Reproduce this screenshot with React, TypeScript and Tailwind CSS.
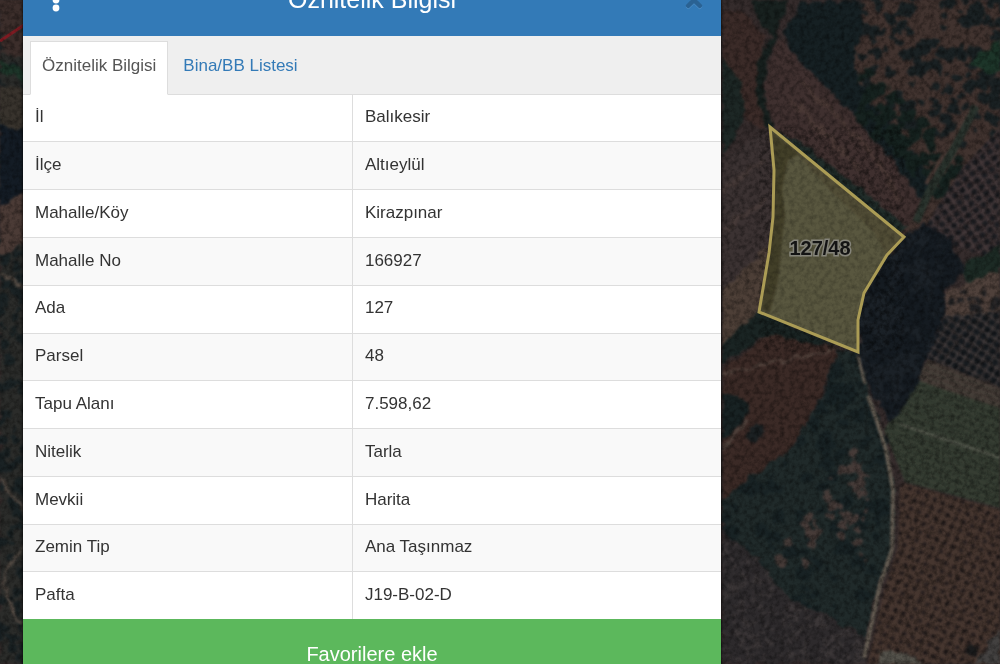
import { useState } from 'react'
import { FaTimes } from 'react-icons/fa'

const rows = [
    ['İl', 'Balıkesir'],
    ['İlçe', 'Altıeylül'],
    ['Mahalle/Köy', 'Kirazpınar'],
    ['Mahalle No', '166927'],
    ['Ada', '127'],
    ['Parsel', '48'],
    ['Tapu Alanı', '7.598,62'],
    ['Nitelik', 'Tarla'],
    ['Mevkii', 'Harita'],
    ['Zemin Tip', 'Ana Taşınmaz'],
    ['Pafta', 'J19-B-02-D'],
]

type Blob = { x: number; y: number; r: number; q: number }

// small seeded generator so the trees stay in the same place on every render
function scatter(seed: number, count: number, x: number, y: number, w: number, h: number, min: number, max: number): Blob[] {
    let s = seed
    const next = () => {
        s = (s * 16807) % 2147483647
        return s / 2147483647
    }
    return Array.from({ length: count }, () => ({
        x: x + next() * w,
        y: y + next() * h,
        r: min + next() * (max - min),
        q: 0.7 + next() * 0.5,
    }))
}

const scrub = scatter(71, 170, 850, -5, 160, 150, 2, 7)
const grove = scatter(19, 220, 860, 70, 110, 130, 3, 7)
const clearings = scatter(43, 80, 765, 450, 105, 115, 2, 6)
const forest = scatter(7, 190, 860, 225, 110, 190, 3, 8)
const valley = scatter(29, 260, 722, 340, 170, 300, 2, 8)
const heath = scatter(83, 420, 715, 540, 150, 125, 1, 3)
const leftTrees = scatter(101, 190, -4, 0, 34, 664, 2, 6)

function Blobs({ items, fill, opacity = 1 }: { items: Blob[]; fill: string; opacity?: number }) {
    return (
        <g fill={fill} opacity={opacity}>
            {items.map((b, i) => <ellipse key={i} cx={b.x} cy={b.y} rx={b.r} ry={b.r * b.q} />)}
        </g>
    )
}

function SatelliteMap() {
    return (
        <svg className="absolute inset-0 h-full w-full" viewBox="0 0 1000 664" preserveAspectRatio="xMidYMid slice" role="img" aria-label="Parsel 127/48">
            <defs>
                <filter id="rough" x="0" y="0" width="1" height="1" colorInterpolationFilters="sRGB">
                    <feTurbulence type="fractalNoise" baseFrequency="0.09" numOctaves="3" seed="4" result="n" />
                    <feDisplacementMap in="SourceGraphic" in2="n" scale="11" xChannelSelector="R" yChannelSelector="G" result="d" />
                    <feGaussianBlur in="d" stdDeviation="0.9" />
                </filter>
                <filter id="soft" colorInterpolationFilters="sRGB">
                    <feGaussianBlur stdDeviation="0.8" />
                </filter>
                <filter id="grain" x="0" y="0" width="1" height="1" colorInterpolationFilters="sRGB">
                    <feTurbulence type="fractalNoise" baseFrequency="0.2" numOctaves="4" seed="9" />
                    <feColorMatrix values="0 0 0 0 0  0 0 0 0 0  0 0 0 0 0  1.6 0 0 0 -0.6" />
                </filter>
                <pattern id="orchard" width="9" height="8" patternUnits="userSpaceOnUse" patternTransform="rotate(-35)">
                    <circle cx="4" cy="4" r="3" fill="#1b1c20" />
                </pattern>
                <pattern id="orchardDense" width="8" height="8" patternUnits="userSpaceOnUse" patternTransform="rotate(32)">
                    <circle cx="4" cy="4" r="3.3" fill="#161a1e" />
                </pattern>
                <pattern id="orchardRed" width="9" height="9" patternUnits="userSpaceOnUse" patternTransform="rotate(24)">
                    <circle cx="4" cy="4" r="2.2" fill="#241d1d" />
                </pattern>
                <pattern id="furrows" width="8" height="6" patternUnits="userSpaceOnUse" patternTransform="rotate(21)">
                    <path d="M0 2h8" stroke="#4a4b40" strokeWidth="1" />
                </pattern>
                <clipPath id="forestClip">
                    <path d="M904 237L925 222 948 238 966 272 944 290 946 312 930 352 912 395 890 424 866 380 858 352 858 320 864 293 887 255z" />
                </clipPath>
                <clipPath id="valleyClip">
                    <path d="M722 500L745 480 790 450 820 400 838 350 858 354 872 400 886 440 894 490 892 550 878 590 866 636 830 618 790 600 760 562 722 530z" />
                </clipPath>
            </defs>
            <rect width="1000" height="664" fill="#352c2c" />
            <g filter="url(#rough)">
                <rect x="840" width="160" height="240" fill="#41332f" />
                <Blobs items={scrub} fill="#1a2123" />
                <path d="M970 60L1000 40V72L985 74z" fill="#1d3529" />
                <path d="M722 10L742 12 766 36 758 78 764 128 722 110z" fill="#3b2b28" />
                <path d="M722 60L738 80 746 108 740 128 722 155z" fill="#1d2725" />
                <path d="M776 40L800 52 846 104 872 130 916 186 924 202 904 230 870 208 772 130 764 90z" fill="#3f302f" />
                <path d="M800 80L870 150 900 200M790 100L860 170" stroke="#4a3935" strokeWidth="4" fill="none" />
                <path d="M748 0H788L776 32 768 60 764 90 772 126 782 136 764 126 756 90 758 62 770 36z" fill="#18211f" />
                <path d="M782 34L802 2 862 0 862 32 852 62 872 104 908 144 936 184 926 204 904 176 868 132 842 102 800 62z" fill="#162023" />
                <path d="M772 128L800 142 870 196 908 228 896 234z" fill="#202c29" />
                <Blobs items={grove.filter(b => b.y < b.x - 740 && b.y > b.x - 800)} fill="#16221f" />
                <path d="M722 160L768 128 775 170 770 250 722 292z" fill="#3b3232" />
                <path d="M722 190L764 160M722 230L766 200" stroke="#463a38" strokeWidth="5" />
                <path d="M722 292L768 246 759 314 722 350z" fill="#4d3f37" />
                <path d="M722 345L758 310 838 346 758 340 722 364z" fill="#1a2423" />
            </g>
            <g filter="url(#soft)">
                <path d="M1000 128L962 168 938 206 926 226 946 244 1000 260z" fill="#413637" />
                <path d="M1000 128L962 168 938 206 926 226 946 244 1000 260z" fill="url(#orchard)" />
                <path d="M976 106L952 152 928 194 916 222" stroke="#2a332d" strokeWidth="8" fill="none" />
                <path d="M968 110L944 154 926 184" stroke="#483934" strokeWidth="4" fill="none" />
                <path d="M944 312L1000 306V388L926 358z" fill="#3e3838" />
                <path d="M944 312L1000 306V388L926 358z" fill="url(#orchardDense)" />
            </g>
            <g filter="url(#rough)">
                <path d="M960 268L1000 244V274L968 286z" fill="#1d2b25" />
                <path d="M944 292L1000 270V312L946 316z" fill="#4f413b" />
                <Blobs items={forest.filter(b => b.y > 290 && b.y < 312).map(b => ({ ...b, x: b.x + 60, r: b.r / 2 }))} fill="#222224" />
                <path d="M722 370L770 334 838 350 818 402 790 452 745 482 722 500z" fill="#3b2a26" />
                <path d="M722 376L772 362 838 350" stroke="#564740" strokeWidth="2" fill="none" />
                <path d="M722 450L748 420" stroke="#50433d" strokeWidth="4" />
                <path d="M722 392L740 396 750 410 736 430 722 438z" fill="#182223" />
                <circle cx="755" cy="434" r="9" fill="#1b2022" />
            </g>
            <g filter="url(#soft)">
                <path d="M928 360L1000 388V508L905 482 884 430z" fill="#31392f" />
                <path d="M928 360L1000 388V408L916 380z" fill="#433a35" />
                <path d="M928 360L1000 388V508L905 482 884 430z" fill="url(#furrows)" opacity="0.7" />
                <path d="M900 424L1000 458" stroke="#595c51" strokeWidth="2" />
                <path d="M900 482L1000 510V664H868L884 590 898 548z" fill="#46362f" />
                <path d="M900 482L1000 510V664H868L884 590 898 548z" fill="url(#orchardRed)" />
            </g>
            <g filter="url(#rough)">
                <path d="M722 530L760 562 790 600 866 636V664H722z" fill="#2d2a2c" />
                <Blobs items={heath.filter(b => b.y > 560 + (b.x - 760) * 0.75)} fill="#4a4343" opacity={0.55} />
            </g>
            <g filter="url(#rough)">
                <g clipPath="url(#valleyClip)">
                    <rect x="722" y="340" width="180" height="310" fill="#202a2a" />
                    <Blobs items={valley} fill="#162023" opacity={0.7} />
                    <Blobs items={clearings.filter(b => b.y > 600 - (b.x - 740) * 1.4)} fill="#463b38" />
                </g>
                <g clipPath="url(#forestClip)">
                    <rect x="850" y="215" width="125" height="215" fill="#1b2127" />
                    <Blobs items={forest} fill="#13191f" opacity={0.7} />
                </g>
                <path d="M876 664L882 650 904 652 920 664z" fill="#54524b" />
                <path d="M974 664L1000 626V664z" fill="#434140" />
                <circle cx="972" cy="652" r="6" fill="#1a1b1c" />
            </g>
            <g filter="url(#soft)" stroke="#645c52" fill="none">
                <path d="M858 356L865 384" strokeWidth="3" />
                <path d="M868 396L876 418 886 450 893 490 892 550 880 584 872 622 864 658" strokeWidth="4" />
            </g>
            {/* left edge of the map, beside the panel */}
            <g filter="url(#rough)">
                <rect width="30" height="664" fill="#2b2c2a" />
                <Blobs items={leftTrees} fill="#1a2224" />
                <path d="M0 0H30V60L0 52z" fill="#3c2e2b" />
                <path d="M0 60L30 72V82L0 72z" fill="#1d3529" />
                <path d="M0 84L30 90V130L0 124z" fill="#38332d" />
                <path d="M0 124L30 130V188L0 206z" fill="#141c25" />
                <path d="M0 206L30 188V240L0 256z" fill="#4b3b36" />
                <path d="M0 272L30 290M0 480L30 518M30 544C0 556 -4 604 30 632" stroke="#534a43" strokeWidth="3" fill="none" />
            </g>
            <path d="M0 41L24 25" stroke="#7d1b22" strokeWidth="3" />
            <rect width="1000" height="664" filter="url(#grain)" opacity="0.5" />
            <path d="M770 127L774 170 773 217 769 253 759 312 858 352 858 320 864 293 887 255 904 237z" fill="#59573f" />
            <g filter="url(#soft)">
                <path d="M772 132L774 170 773 217 769 253 761 310 770 312 778 282 782 240 785 215 782 190 788 160 800 154z" fill="#39351f" opacity="0.7" />
                <path d="M790 146L904 237 887 255 874 232 830 190z" fill="#4d4630" opacity="0.6" />
            </g>
            <path d="M770 127L774 170 773 217 769 253 759 312 858 352 858 320 864 293 887 255 904 237z" filter="url(#grain)" opacity="0.3" />
            <path d="M770 127L774 170 773 217 769 253 759 312 858 352 858 320 864 293 887 255 904 237z" fill="none" stroke="#ab9c55" strokeWidth="3" />
            <text x="820" y="255" textAnchor="middle" className="font-['Liberation_Sans'] text-[20px] font-bold" fill="#141414" stroke="#85847a" strokeWidth="3" paintOrder="stroke">127/48</text>
        </svg>
    )
}

export default function App() {
    const [tab, setTab] = useState('info')
    const active = 'border-[#ddd] border-b-white bg-white text-[#555]'
    const idle = 'border-transparent text-[#337ab7]'

    return (
        <main className="relative h-screen overflow-hidden bg-[#352c2c] font-['Liberation_Sans',Arial,sans-serif] text-[17px] text-[#333]">
            <SatelliteMap />
            <section className="relative -mt-9 ml-[23px] w-[69.8%] bg-white shadow-[0_0_3px_#000]">
                <header className="flex h-[72px] items-center justify-between bg-[#337ab7] px-[15px] text-white">
                    <button aria-label="Menü" className="flex w-9 justify-center">
                        <svg width="8" height="24" viewBox="0 0 8 24" fill="currentColor">
                            <circle cx="4" cy="4" r="3.4" />
                            <circle cx="4" cy="12" r="3.4" />
                            <circle cx="4" cy="20" r="3.4" />
                        </svg>
                    </button>
                    <h1 className="pb-0.5 text-[25px] leading-7">Öznitelik Bilgisi</h1>
                    <button aria-label="Kapat" className="flex w-9 justify-end text-[#2a6293] drop-shadow-[0_1px_0_#4a8ac2]">
                        <FaTimes size={24} />
                    </button>
                </header>
                <nav role="tablist" className="flex items-end gap-[3px] border-b border-[#ddd] bg-[#efefef] px-[7px] pt-[5px]">
                    <button
                        role="tab"
                        aria-selected={tab === 'info'}
                        onClick={() => setTab('info')}
                        className={`-mb-px h-[54px] border px-[11px] pb-1 ${tab === 'info' ? active : idle}`}
                    >
                        Öznitelik Bilgisi
                    </button>
                    <button
                        role="tab"
                        aria-selected={tab === 'units'}
                        onClick={() => setTab('units')}
                        className={`-mb-px h-[54px] border px-[11px] pb-1 ${tab === 'units' ? active : idle}`}
                    >
                        Bina/BB Listesi
                    </button>
                </nav>
                <table className="h-[524px] w-full table-fixed border-collapse">
                    <tbody>
                        {rows.map(([label, value]) => (
                            <tr key={label} className="border-b border-[#ddd] last:border-b-0 even:bg-[#f9f9f9]">
                                <th scope="row" className="w-[47.2%] px-3 pb-0.5 text-left font-normal">{label}</th>
                                <td className="border-l border-[#ddd] px-3 pb-0.5">{value}</td>
                            </tr>
                        ))}
                    </tbody>
                </table>
                <button className="h-[70px] w-full bg-[#5cb85c] text-[20px] text-white">Favorilere ekle</button>
            </section>
        </main>
    )
}
